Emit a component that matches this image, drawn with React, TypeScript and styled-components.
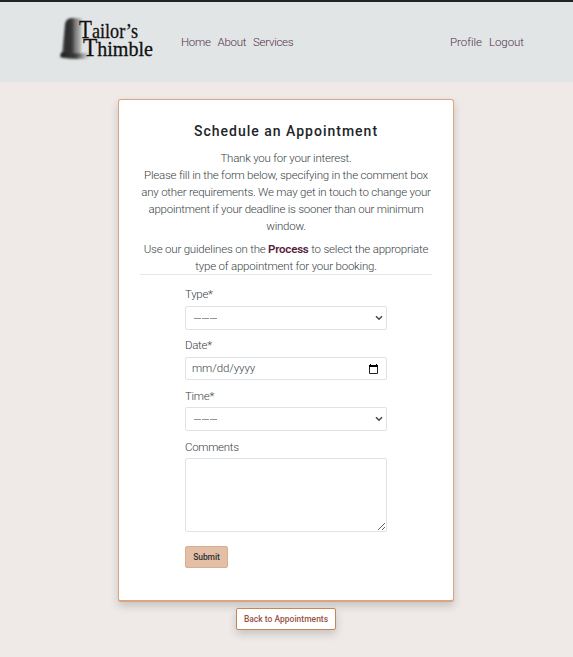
import React from "react";
import styled, { createGlobalStyle } from "styled-components";

const GlobalStyle = createGlobalStyle`
  *, *::before, *::after { box-sizing: border-box; }
  body {
    margin: 0;
    background: #efeae8;
    color: #393f46;
    font: 300 11.5px/17px Roboto, "Liberation Sans", sans-serif;
  }
`;

const Page = styled.div`
  height: 657px;
  overflow: hidden;
  display: flex;
  flex-direction: column;
  align-items: center;
`;

const Header = styled.header`
  width: 100%;
  height: 82px;
  border-top: 2px solid #212325;
  background: #e1e5e5;
  display: flex;
  align-items: center;
  padding: 0 49px 0 56px;
`;

const Logo = styled.svg`
  width: 102px;
  height: 52px;
  margin: -8px 23px 0 0;
  flex: none;
  overflow: visible;
`;

const Nav = styled.nav<{ $end?: boolean }>`
  display: flex;
  gap: 7px;
  margin-left: ${(p) => (p.$end ? "auto" : "0")};
  letter-spacing: ${(p) => (p.$end ? -0.05 : -0.3)}px;
`;

const NavLink = styled.a`
  color: #522f4b;
  cursor: pointer;
`;

const Card = styled.main`
  width: 336px;
  height: 503px;
  margin: 17px 1px 0 0;
  padding: 22px 21px 0;
  background: #fff;
  border: 1px solid #dba581;
  border-bottom-width: 2px;
  border-radius: 3px;
  box-shadow: 0 4px 8px rgba(0, 0, 0, 0.17);
  flex: none;
`;

const Title = styled.h1`
  margin: 0 0 9px;
  color: #212529;
  text-align: center;
  font-size: 14px;
  line-height: 19px;
  font-weight: 500;
  letter-spacing: 1px;
  white-space: nowrap;
`;

const Paragraph = styled.p`
  margin: 0 0 6px;
  text-align: center;
`;

const Line = styled.span<{ $spacing?: number }>`
  display: block;
  white-space: nowrap;
  letter-spacing: ${(p) => p.$spacing ?? -0.22}px;
`;

const Process = styled.strong`
  color: #571b3d;
  font-weight: 600;
`;

const Form = styled.form`
  margin: -7px 0 0;
  border-top: 1px solid #e6e7e8;
  padding: 11px 45px 0;
  display: flex;
  flex-direction: column;
`;

const Field = styled.div<{ $tight?: boolean }>`
  display: flex;
  flex-direction: column;
  gap: ${(p) => (p.$tight ? 2 : 3)}px;
  margin-bottom: ${(p) => (p.$tight ? 8 : 7)}px;
`;

const Caption = styled.label`
  height: 17px;
  letter-spacing: -0.3px;
`;

const Control = styled.div`
  height: 24px;
  display: flex;
  align-items: center;
  justify-content: space-between;
  padding: 0 3px 0 8px;
  border: 1px solid #dfe2e6;
  border-radius: 2px;
`;

const DateControl = styled(Control)`
  height: 23px;
  margin-bottom: 1px;
  padding: 0 8px 0 6px;
  letter-spacing: -0.1px;
`;

const Dashes = styled.span`
  display: flex;
  gap: 1px;
  &::before, &::after, i { content: ""; width: 7px; height: 1px; background: #8f959a; }
`;

const Comments = styled.textarea`
  height: 74px;
  padding: 5px;
  border: 1px solid #dfe2e6;
  border-radius: 2px;
  resize: vertical;
  font: inherit;
`;

const Submit = styled.button`
  align-self: flex-start;
  width: 43px;
  height: 22px;
  margin-top: 6px;
  padding: 0;
  background: #e3bfa6;
  border: 1px solid #dbad8e;
  border-radius: 2px;
  color: #303238;
  font: 500 8.5px/18px Roboto, sans-serif;
  letter-spacing: -0.1px;
`;

const Back = styled.a`
  width: 100px;
  height: 22px;
  margin: 6px 1px 0 0;
  background: #fff;
  border: 1px solid #c68659;
  border-radius: 2px;
  box-shadow: 0 4px 8px rgba(0, 0, 0, 0.17);
  color: #985444;
  text-align: center;
  white-space: nowrap;
  font-size: 8.5px;
  line-height: 20px;
  font-weight: 500;
`;

const Chevron = () => (
  <svg width="8" height="6" viewBox="0 0 8 6">
    <path d="M1 1.2 4 4.2 7 1.2" fill="none" stroke="#454b52" strokeWidth="1.6" />
  </svg>
);

const CalendarIcon = () => (
  <svg width="9" height="10" viewBox="0 0 9 10">
    <path d="M.5 1.5h8v8h-8z" fill="none" stroke="#222" />
    <path d="M0 1h9v2H0zM1 0h1v1H1zM7 0h1v1H7z" fill="#000" />
  </svg>
);

const SelectBox = () => (
  <Control>
    <Dashes><i /></Dashes>
    <Chevron />
  </Control>
);

const Brand = () => (
  <Logo viewBox="56 12 102 52" role="img" aria-label="Tailor's Thimble">
    <defs>
      <linearGradient id="metal" x1="0" x2="1">
        <stop offset="0" stopColor="#555" />
        <stop offset=".2" stopColor="#2c2c2c" />
        <stop offset=".5" stopColor="#383838" />
        <stop offset=".65" stopColor="#777" />
        <stop offset="1" stopColor="#c4c7c7" />
      </linearGradient>
      <linearGradient id="base" x1="0" x2="1">
        <stop offset="0" stopColor="#202020" />
        <stop offset=".5" stopColor="#3a3a3a" />
        <stop offset="1" stopColor="#555" stopOpacity="0" />
      </linearGradient>
      <filter id="soft"><feGaussianBlur stdDeviation=".8" /></filter>
    </defs>
    <g filter="url(#soft)">
      <path d="M65 24Q66 18 72 18L82 18.5 81 56Q72 58 62 55Z" fill="url(#metal)" />
      <path d="M62 52Q74 54 88 53L90 58Q74 60 61 57.5Q59 55 62 52Z" fill="url(#base)" />
    </g>
    <g fill="#111" stroke="#111" strokeWidth=".3" fontFamily='"Liberation Serif", serif' fontSize="21.5">
      <text x="79" y="38" textLength="59" lengthAdjust="spacingAndGlyphs">
        <tspan fontSize="25">T</tspan>ailor’s
      </text>
      <text x="83" y="55.5" textLength="70" lengthAdjust="spacingAndGlyphs">
        <tspan fontSize="25">T</tspan>himble
      </text>
    </g>
  </Logo>
);

export default function App() {
  return (
    <Page>
      <GlobalStyle />
      <Header>
        <Brand />
        <Nav>
          <NavLink>Home</NavLink>
          <NavLink>About</NavLink>
          <NavLink>Services</NavLink>
        </Nav>
        <Nav $end>
          <NavLink>Profile</NavLink>
          <NavLink>Logout</NavLink>
        </Nav>
      </Header>
      <Card>
        <Title>Schedule an Appointment</Title>
        <Paragraph>
          <Line>Thank you for your interest.</Line>
          <Line>Please fill in the form below, specifying in the comment box</Line>
          <Line>any other requirements. We may get in touch to change your</Line>
          <Line $spacing={-0.24}>appointment if your deadline is sooner than our minimum</Line>
          <Line>window.</Line>
        </Paragraph>
        <Paragraph>
          <Line $spacing={-0.2}>Use our guidelines on the <Process>Process</Process> to select the appropriate</Line>
          <Line $spacing={-0.2}>type of appointment for your booking.</Line>
        </Paragraph>
        <Form>
          <Field><Caption>Type*</Caption><SelectBox /></Field>
          <Field>
            <Caption>Date*</Caption>
            <DateControl>mm/dd/yyyy<CalendarIcon /></DateControl>
          </Field>
          <Field $tight><Caption>Time*</Caption><SelectBox /></Field>
          <Field $tight><Caption htmlFor="comments">Comments</Caption><Comments id="comments" /></Field>
          <Submit type="button">Submit</Submit>
        </Form>
      </Card>
      <Back>Back to Appointments</Back>
    </Page>
  );
}
